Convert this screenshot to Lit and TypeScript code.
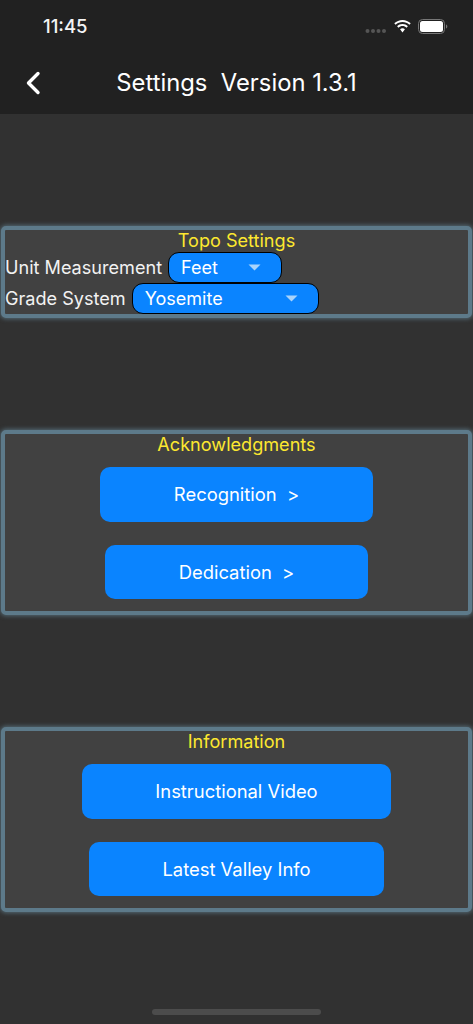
import { LitElement, html, css, svg } from "lit";
import { customElement } from "lit/decorators.js";

const caret = svg`<svg class="caret" width="13" height="7" viewBox="0 0 13 7"><path d="M0.500 0.500H12.500L6.500 6.500Z" fill="#a9d3fb"/></svg>`;

@customElement("app-root")
export class AppRoot extends LitElement {
  static styles = css`
    :host { display: block; width: 473px; height: 1024px; position: relative; overflow: hidden; background: #313131; font-family: Inter, "Liberation Sans", sans-serif; color: #fff; }
    .head { height: 114px; background: #212121; box-sizing: border-box; display: flex; flex-direction: column; }
    .status { height: 53px; display: flex; align-items: center; padding: 0 25px 0 43px; box-sizing: border-box; }
    .time { font-size: 18.500px; font-weight: 500; line-height: 53px; flex: 1; color: #f4f4f4; }
    .status svg { display: block; }
    .icons { display: flex; align-items: center; gap: 6px; }
    .dots { position: relative; top: 4px; }
    .nav { height: 60px; position: relative; display: flex; align-items: center; justify-content: center; }
    .back { position: absolute; left: 25px; top: 18px; }
    .title { font-size: 23.800px; white-space: pre; position: relative; top: -1px; }
    .main { display: flex; flex-direction: column; gap: 112px; padding: 112px 1px 0; }
    .panel { box-sizing: border-box; height: 185px; background: #414141; border: 4px solid #5d7a8a; border-radius: 5px; box-shadow: 0 0 4px 1px #546a75; display: flex; flex-direction: column; align-items: center; }
    .panel.small { height: 92px; align-items: stretch; }
    .h { color: #fde82f; font-size: 18.100px; line-height: 21px; text-align: center; margin-bottom: 1px; }
    .btn { box-sizing: border-box; height: 54.500px; background: #0a84ff; border-radius: 10px; display: flex; align-items: center; justify-content: center; font-size: 18.400px; white-space: pre; }
    .h + .btn { margin-top: 11px; }
    .btn + .btn { margin-top: 23px; }
    .row { display: flex; align-items: center; height: 31px; gap: 6px; font-size: 18.100px; color: #f2f2f2; }
    .label { margin-bottom: 2px; }
    .sel { box-sizing: border-box; height: 31px; background: #0a84ff; border: 1.500px solid #000; border-radius: 11px; display: flex; align-items: center; justify-content: space-between; font-size: 18px; color: #fff; padding: 0 20px 1px 12px; }
    .sel.feet { width: 114px; }
    .sel.grade { width: 187px; }
    .w273 { width: 273px; } .w263 { width: 263px; } .w309 { width: 309px; } .w295 { width: 295px; }
    .bar { position: absolute; left: 152px; top: 1009px; width: 169px; height: 6px; border-radius: 3px; background: #4c4c4c; }
  `;

  render() {
    return html`
      <div class="head">
        <div class="status">
          <div class="time">11:45</div>
          <div class="icons">
            <svg class="dots" width="22" height="6" viewBox="0 0 22 6"><g fill="#555"><circle cx="2.500" cy="3" r="2"/><circle cx="8" cy="3" r="2"/><circle cx="13.500" cy="3" r="2"/><circle cx="19" cy="3" r="2"/></g></svg>
            <svg width="19" height="15" viewBox="0 0 18 14"><path d="M9 2.800c2.500 0 4.800 1 6.500 2.600l1.300-1.400C14.700 2 12 .8 9 .8S3.300 2 1.200 4l1.300 1.400C4.200 3.800 6.500 2.800 9 2.800Z" fill="#fff"/><path d="M9 6.600c1.500 0 2.800.6 3.800 1.500l1.300-1.400C12.800 5.400 11 4.700 9 4.700s-3.800.7-5.100 2l1.300 1.400c1-.9 2.300-1.500 3.800-1.500Z" fill="#fff"/><path d="M9 8.700c-.9 0-1.700.3-2.300.9L9 12.600l2.300-3c-.6-.6-1.400-.9-2.300-.9Z" fill="#fff"/></svg>
            <svg width="30" height="15" viewBox="0 0 30 15"><rect x="0.500" y="0.500" width="26" height="14" rx="4" fill="none" stroke="#777"/><rect x="2" y="2" width="23" height="11" rx="2.500" fill="#fff"/><path d="M28 5.500v4c.8-.3 1.300-1 1.300-2S28.800 5.800 28 5.500Z" fill="#777"/></svg>
          </div>
        </div>
        <div class="nav">
          <svg class="back" width="16" height="24" viewBox="0 0 16 24"><path d="M13 2.500 3.500 12 13 21.500" fill="none" stroke="#fff" stroke-width="3.400" stroke-linecap="round" stroke-linejoin="round"/></svg>
          <div class="title">Settings  Version 1.3.1</div>
        </div>
      </div>
      <div class="main">
        <section class="panel small">
          <div class="h">Topo Settings</div>
          <div class="row"><span class="label">Unit Measurement</span><div class="sel feet">Feet${caret}</div></div>
          <div class="row"><span class="label">Grade System</span><div class="sel grade">Yosemite${caret}</div></div>
        </section>
        <section class="panel">
          <div class="h">Acknowledgments</div>
          <div class="btn w273">Recognition  &gt;</div>
          <div class="btn w263">Dedication  &gt;</div>
        </section>
        <section class="panel">
          <div class="h">Information</div>
          <div class="btn w309">Instructional Video</div>
          <div class="btn w295">Latest Valley Info</div>
        </section>
      </div>
      <div class="bar"></div>
    `;
  }
}
